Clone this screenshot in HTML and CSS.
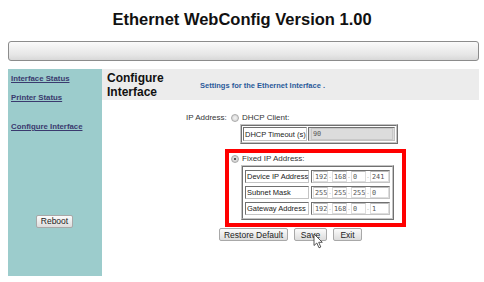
FILE: index.html
```html
<!DOCTYPE html>
<html lang="en">
<head>
    <meta charset="UTF-8">
    <title>Ethernet WebConfig</title>
    <link rel="stylesheet" href="styles.css">
</head>
<body>
    <h1 class="title">Ethernet WebConfig Version 1.00</h1>
    <div class="page">
        <div class="bar"></div>
        <div class="layout">
            <div class="side">
                <a href="#" class="side-link">Interface Status</a>
                <a href="#" class="side-link">Printer Status</a>
                <a href="#" class="side-link gap">Configure Interface</a>
                <div class="side-btn"><button class="btn reboot">Reboot</button></div>
            </div>
            <div class="main">
                <div class="head">
                    <h2>Configure<br>Interface</h2>
                    <p>Settings for the Ethernet Interface .</p>
                </div>
                <div class="form">
                    <div class="ip-row">
                        <span class="ip-label">IP Address:</span>
                        <div class="opts">
                            <label class="opt"><span class="radio"></span>DHCP Client:</label>
                            <table class="box dhcp">
                                <tr>
                                    <td class="lbl">DHCP Timeout (s)</td>
                                    <td class="val"><input class="wide" value="90" disabled></td>
                                </tr>
                            </table>
                            <div class="hl">
                                <label class="opt"><span class="radio on"></span>Fixed IP Address:</label>
                                <table class="box fixed">
                                    <tr>
                                        <td class="lbl">Device IP Address</td>
                                        <td class="val"><input value="192"><i>.</i><input value="168"><i>.</i><input value="0"><i>.</i><input class="last" value="241"></td>
                                    </tr>
                                    <tr>
                                        <td class="lbl">Subnet Mask</td>
                                        <td class="val"><input value="255"><i>.</i><input value="255"><i>.</i><input value="255"><i>.</i><input class="last" value="0"></td>
                                    </tr>
                                    <tr>
                                        <td class="lbl">Gateway Address</td>
                                        <td class="val"><input value="192"><i>.</i><input value="168"><i>.</i><input value="0"><i>.</i><input class="last" value="1"></td>
                                    </tr>
                                </table>
                            </div>
                        </div>
                    </div>
                    <div class="actions">
                        <button class="btn restore">Restore Default</button>
                        <button class="btn save">Save</button>
                        <button class="btn exit">Exit</button>
                        <svg class="cursor" width="11" height="16" viewBox="0 0 11 16">
                            <path d="M1 1 L1 12.5 L3.8 10 L6 14.8 L7.8 14 L5.7 9.3 L9.3 9.3 Z" fill="#fff" stroke="#444" stroke-width="0.9"/>
                        </svg>
                    </div>
                </div>
            </div>
        </div>
    </div>
</body>
</html>
```

FILE: styles.css
```css
*{
    margin: 0;
    padding: 0;
    box-sizing: border-box;
}
body{
    font-family: "Liberation Sans", Arial, sans-serif;
    background: #fff;
    color: #222;
}
.title{
    font-size: 16.5px;
    line-height: 20px;
    text-align: center;
    padding-top: 9px;
    height: 41px;
    color: #111;
}
.page{
    padding: 0 5px 0 8px;
}
.bar{
    height: 20px;
    border: 1px solid #8c8c8c;
    border-radius: 3px;
    background: linear-gradient(#fafafa, #e6e6e6 70%, #d8d8d8);
}
.layout{
    display: flex;
    margin-top: 8px;
    height: 207px;
}
.side{
    width: 94px;
    background: #9ccccc;
    display: flex;
    flex-direction: column;
    padding: 5px 0 0 3px;
}
.side-link{
    font-size: 7.8px;
    font-weight: bold;
    color: #3a3a6e;
    line-height: 10px;
    margin-bottom: 9px;
}
.side-link.gap{
    margin-top: 10px;
}
.side-btn{
    margin-top: 69px;
    padding-left: 25px;
}
.main{
    flex: 1;
}
.head{
    background: #ececec;
    height: 31px;
    display: flex;
    align-items: center;
    padding-left: 5px;
}
.head h2{
    font-size: 12px;
    line-height: 14px;
    width: 93px;
    color: #111;
}
.head p{
    font-size: 7.5px;
    font-weight: bold;
    color: #2a5a9a;
    padding-top: 2px;
}
.form{
    padding: 13px 0 0 84px;
    font-size: 8px;
    color: #333;
}
.ip-row{
    display: flex;
}
.ip-label{
    width: 45px;
    line-height: 10px;
}
.opt{
    display: flex;
    align-items: center;
    line-height: 10px;
}
.radio{
    width: 8px;
    height: 8px;
    border-radius: 50%;
    border: 1px solid #aaa;
    background: radial-gradient(#f4f4f4, #cfcfcf);
    margin-right: 3px;
}
.radio.on{
    background: radial-gradient(#555 25%, #ddd 35%, #c8c8c8);
}
.box{
    border: 2px ridge #c4c4c4;
    background: #fff;
    table-layout: fixed;
}
.box td{
    border: 1px inset #c4c4c4;
    padding: 0 1px;
    white-space: nowrap;
}
.lbl{
    width: 64px;
    font-size: 7.5px;
    color: #222;
}
.dhcp{
    width: 158px;
    border-spacing: 1px;
    margin: 1px 0 0 9px;
}
.dhcp td{
    height: 14px;
}
.dhcp .val{
    background: #dcdcdc;
    padding: 0 0 0 2px;
}
.dhcp input.wide{
    width: 82px;
    background: #dcdcdc;
    border: 1px solid #c8c8c8;
    height: 12px;
    margin: 0;
}
.hl{
    border: 4px solid #f00;
    width: 181px;
    height: 78px;
    margin: 5px 0 0 -6px;
    padding: 1px 0 0 2px;
}
.fixed{
    width: 153px;
    border-spacing: 2px 3px;
    margin: 1px 0 0 10px;
}
.fixed td{
    height: 13px;
}
.fixed .val{
    font-size: 7px;
    color: #999;
    padding: 0 0 0 1px;
}
.fixed i{
    font-style: normal;
    display: inline-block;
    width: 4px;
    text-align: center;
}
input{
    font-family: "DejaVu Sans Mono", monospace;
    font-size: 6.8px;
    color: #555;
    width: 15px;
    height: 11px;
    border: 1px solid #ddd;
    border-top-color: #bbb;
    padding-left: 1px;
    background: #fff;
    vertical-align: middle;
}
input.last{
    width: 19px;
}
.actions{
    display: flex;
    gap: 6px;
    margin: 1px 0 0 33px;
    position: relative;
}
.btn{
    font-family: "Liberation Sans", Arial, sans-serif;
    font-size: 8.5px;
    color: #222;
    height: 13px;
    padding: 0;
    border: 1px solid #a8a8a8;
    border-radius: 2px;
    background: linear-gradient(#fbfbfb, #dcdcdc);
}
.restore{
    width: 69px;
}
.save{
    width: 33px;
}
.exit{
    width: 29px;
}
.reboot{
    width: 37px;
}
.cursor{
    position: absolute;
    left: 94px;
    top: 5px;
}
```
